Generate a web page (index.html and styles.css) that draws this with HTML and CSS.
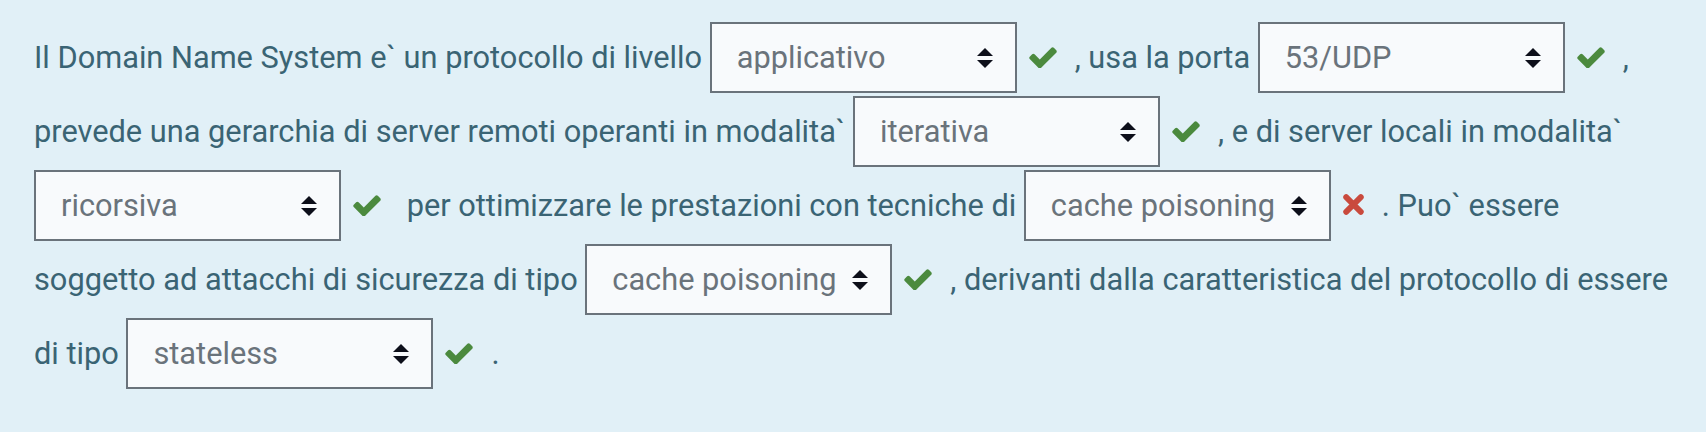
FILE: index.html
```html
<!DOCTYPE html>
<html lang="it">
<head>
<meta charset="utf-8">
<title>DNS</title>
<link rel="stylesheet" href="styles.css">
</head>
<body>
<div class="qtext">Il Domain Name System e` un protocollo di livello <span class="control"><select class="sel"><option>applicativo</option></select><svg class="caret" viewBox="0 0 16 20"><polygon points="0,8 8,0 16,8"/><polygon points="0,12 16,12 8,20"/></svg></span><svg class="icon ok" viewBox="121 260 1550 1240"><path d="M1671 566q0 40-28 68l-724 724-136 136q-28 28-68 28t-68-28l-136-136-362-362q-28-28-28-68t28-68l136-136q28-28 68-28t68 28l294 295 656-657q28-28 68-28t68 28l136 136q28 28 28 68z"/></svg>, usa la porta <span class="control"><select class="sel"><option>53/UDP</option></select><svg class="caret" viewBox="0 0 16 20"><polygon points="0,8 8,0 16,8"/><polygon points="0,12 16,12 8,20"/></svg></span><svg class="icon ok" viewBox="121 260 1550 1240"><path d="M1671 566q0 40-28 68l-724 724-136 136q-28 28-68 28t-68-28l-136-136-362-362q-28-28-28-68t28-68l136-136q28-28 68-28t68 28l294 295 656-657q28-28 68-28t68 28l136 136q28 28 28 68z"/></svg>, prevede una gerarchia di server remoti operanti in modalita` <span class="control"><select class="sel"><option>iterativa</option></select><svg class="caret" viewBox="0 0 16 20"><polygon points="0,8 8,0 16,8"/><polygon points="0,12 16,12 8,20"/></svg></span><svg class="icon ok" viewBox="121 260 1550 1240"><path d="M1671 566q0 40-28 68l-724 724-136 136q-28 28-68 28t-68-28l-136-136-362-362q-28-28-28-68t28-68l136-136q28-28 68-28t68 28l294 295 656-657q28-28 68-28t68 28l136 136q28 28 28 68z"/></svg>, e di server locali in modalita` <span class="control"><select class="sel"><option>ricorsiva</option></select><svg class="caret" viewBox="0 0 16 20"><polygon points="0,8 8,0 16,8"/><polygon points="0,12 16,12 8,20"/></svg></span><svg class="icon ok" viewBox="121 260 1550 1240"><path d="M1671 566q0 40-28 68l-724 724-136 136q-28 28-68 28t-68-28l-136-136-362-362q-28-28-28-68t28-68l136-136q28-28 68-28t68 28l294 295 656-657q28-28 68-28t68 28l136 136q28 28 28 68z"/></svg> per ottimizzare le prestazioni con tecniche di <span class="control"><select class="sel"><option>cache poisoning</option></select><svg class="caret" viewBox="0 0 16 20"><polygon points="0,8 8,0 16,8"/><polygon points="0,12 16,12 8,20"/></svg></span><svg class="icon bad" viewBox="0 0 20 20"><path d="M3 3L17 17M17 3L3 17"/></svg>. Puo` essere soggetto ad attacchi di sicurezza di tipo <span class="control"><select class="sel"><option>cache poisoning</option></select><svg class="caret" viewBox="0 0 16 20"><polygon points="0,8 8,0 16,8"/><polygon points="0,12 16,12 8,20"/></svg></span><svg class="icon ok" viewBox="121 260 1550 1240"><path d="M1671 566q0 40-28 68l-724 724-136 136q-28 28-68 28t-68-28l-136-136-362-362q-28-28-28-68t28-68l136-136q28-28 68-28t68 28l294 295 656-657q28-28 68-28t68 28l136 136q28 28 28 68z"/></svg>, derivanti dalla caratteristica del protocollo di essere di tipo <span class="control"><select class="sel"><option>stateless</option></select><svg class="caret" viewBox="0 0 16 20"><polygon points="0,8 8,0 16,8"/><polygon points="0,12 16,12 8,20"/></svg></span><svg class="icon ok" viewBox="121 260 1550 1240"><path d="M1671 566q0 40-28 68l-724 724-136 136q-28 28-68 28t-68-28l-136-136-362-362q-28-28-28-68t28-68l136-136q28-28 68-28t68 28l294 295 656-657q28-28 68-28t68 28l136 136q28 28 28 68z"/></svg>.</div>
</body>
</html>
```
FILE: styles.css
```css
html, body {
  margin: 0;
  padding: 0;
  background: #e1f0f7;
  height: 100%;
}
.qtext {
  padding: 20px 24px 0 34px;
  font-family: Roboto, "Liberation Sans", sans-serif;
  font-size: 30.75px;
  color: #3a6474;
}
.control {
  display: inline-block;
  position: relative;
}
.sel {
  -webkit-appearance: none;
  appearance: none;
  box-sizing: border-box;
  width: 307px;
  height: 71px;
  margin: 2px 0 1px;
  padding: 0 48px 0 25px;
  border: 2px solid #6a737b;
  border-radius: 0;
  background: #f8fafc;
  color: #6a737b;
  font-family: Roboto, "Liberation Sans", sans-serif;
  font-size: 30.75px;
  vertical-align: baseline;
}
.caret {
  position: absolute;
  right: 24px;
  top: 50%;
  width: 16px;
  height: 20px;
  margin-top: -9px;
  fill: #0d0f1a;
  pointer-events: none;
}
.icon {
  display: inline-block;
  vertical-align: middle;
  margin: -6px 18px 0 12px;
}
.ok {
  width: 28px;
  height: 22px;
  fill: #4b8a3e;
}
.bad {
  width: 21px;
  height: 21px;
  stroke: #c94a3d;
  stroke-width: 5.5;
  stroke-linecap: round;
  fill: none;
}
```
